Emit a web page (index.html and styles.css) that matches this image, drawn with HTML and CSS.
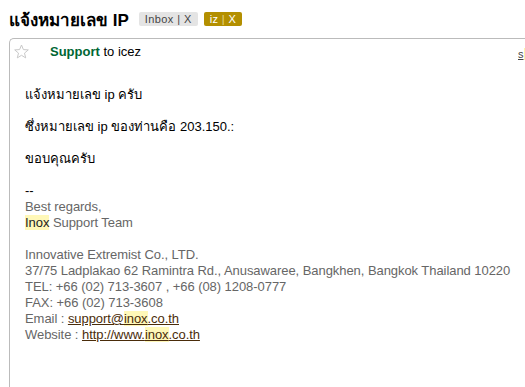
FILE: index.html
```html
<!DOCTYPE html>
<html lang="th">
<head>
  <meta charset="UTF-8">
  <title>แจ้งหมายเลข IP</title>
  <link rel="stylesheet" href="styles.css">
</head>
<body>
  <div class="subject">
    <h1>แจ้งหมายเลข IP</h1>
    <span class="label label-inbox">Inbox <span class="sep">|</span> X</span>
    <span class="label label-iz">iz <span class="sep">|</span> X</span>
  </div>

  <div class="message">
    <div class="msg-head">
      <svg class="star" width="15" height="15" viewBox="0 0 15 15">
        <polygon points="7.5,1 9.4,5.6 14.3,5.9 10.5,9.1 11.7,13.9 7.5,11.3 3.3,13.9 4.5,9.1 0.7,5.9 5.6,5.6" fill="#fff" stroke="#c8c8c8" stroke-width="1"/>
      </svg>
      <span class="sender">Support</span>&nbsp;to icez
      <a class="show" href="#">s</a>
    </div>

    <div class="msg-body">
      <p>แจ้งหมายเลข ip ครับ</p>
      <p>ซึ่งหมายเลข ip ของท่านคือ 203.150.:</p>
      <p>ขอบคุณครับ</p>
      <div class="sig">
        <span class="dash">--</span><br>
        Best regards,<br>
        <span class="hl">Inox</span> Support Team<br>
        <br>
        Innovative Extremist Co., LTD.<br>
        37/75 Ladplakao 62 Ramintra Rd., Anusawaree, Bangkhen, Bangkok Thailand 10220<br>
        TEL: +66 (02) 713-3607 , +66 (08) 1208-0777<br>
        FAX: +66 (02) 713-3608<br>
        Email : <a href="#">support@<span class="hl">inox</span>.co.th</a><br>
        Website : <a href="#">http://www.<span class="hl">inox</span>.co.th</a>
      </div>
    </div>
  </div>
</body>
</html>
```

FILE: styles.css
```css
html, body {
  height: 100%;
}
body {
  margin: 0;
  padding: 0;
  background: #fff;
  color: #000;
  font-family: Arial, "Liberation Sans", "DejaVu Sans", sans-serif;
  font-size: 13px;
  overflow: hidden;
  display: flex;
  flex-direction: column;
}
.subject {
  display: flex;
  align-items: center;
  padding: 8px 0 0 9px;
  height: 22px;
}
h1 {
  margin: 0 10px 0 0;
  font-size: 17px;
  font-weight: bold;
}
.label {
  font-size: 11px;
  padding: 1px 6px;
  margin-right: 6px;
  border-radius: 2px;
  letter-spacing: 0.4px;
}
.label-inbox {
  background: #e4e4e4;
  color: #444;
}
.label-iz {
  background: #b38f00;
  color: #fff;
}
.label-inbox .sep {
  color: #444;
}
.label-iz .sep {
  color: #e8d98a;
}
.message {
  flex: 1;
  margin: 8px 0 0 9px;
  border-top: 1px solid #bbb;
  border-left: 1px solid #bbb;
  border-top-left-radius: 5px;
  overflow: hidden;
}
.msg-head {
  display: flex;
  align-items: center;
  height: 20px;
  padding: 2px 0 0 4px;
  position: relative;
}
.star {
  margin-right: 21px;
}
.sender {
  color: #006633;
  font-weight: bold;
}
.show {
  position: absolute;
  left: 508px;
  top: 9px;
  color: #444;
  font-size: 11px;
  padding-right: 4px;
  background: linear-gradient(to right, transparent 6px, #fff4a8 6px);
}
.msg-body {
  padding: 26px 0 0 15px;
  line-height: 16px;
}
.msg-body p {
  margin: 0 0 16px 0;
}
.sig {
  color: #666;
  letter-spacing: -0.06px;
}
.dash {
  color: #000;
}
.hl {
  background: #fff8b8;
  color: #222;
}
.sig a {
  color: #4a2c0a;
  text-decoration: underline;
}
.sig a .hl {
  color: #4a2c0a;
}
```
